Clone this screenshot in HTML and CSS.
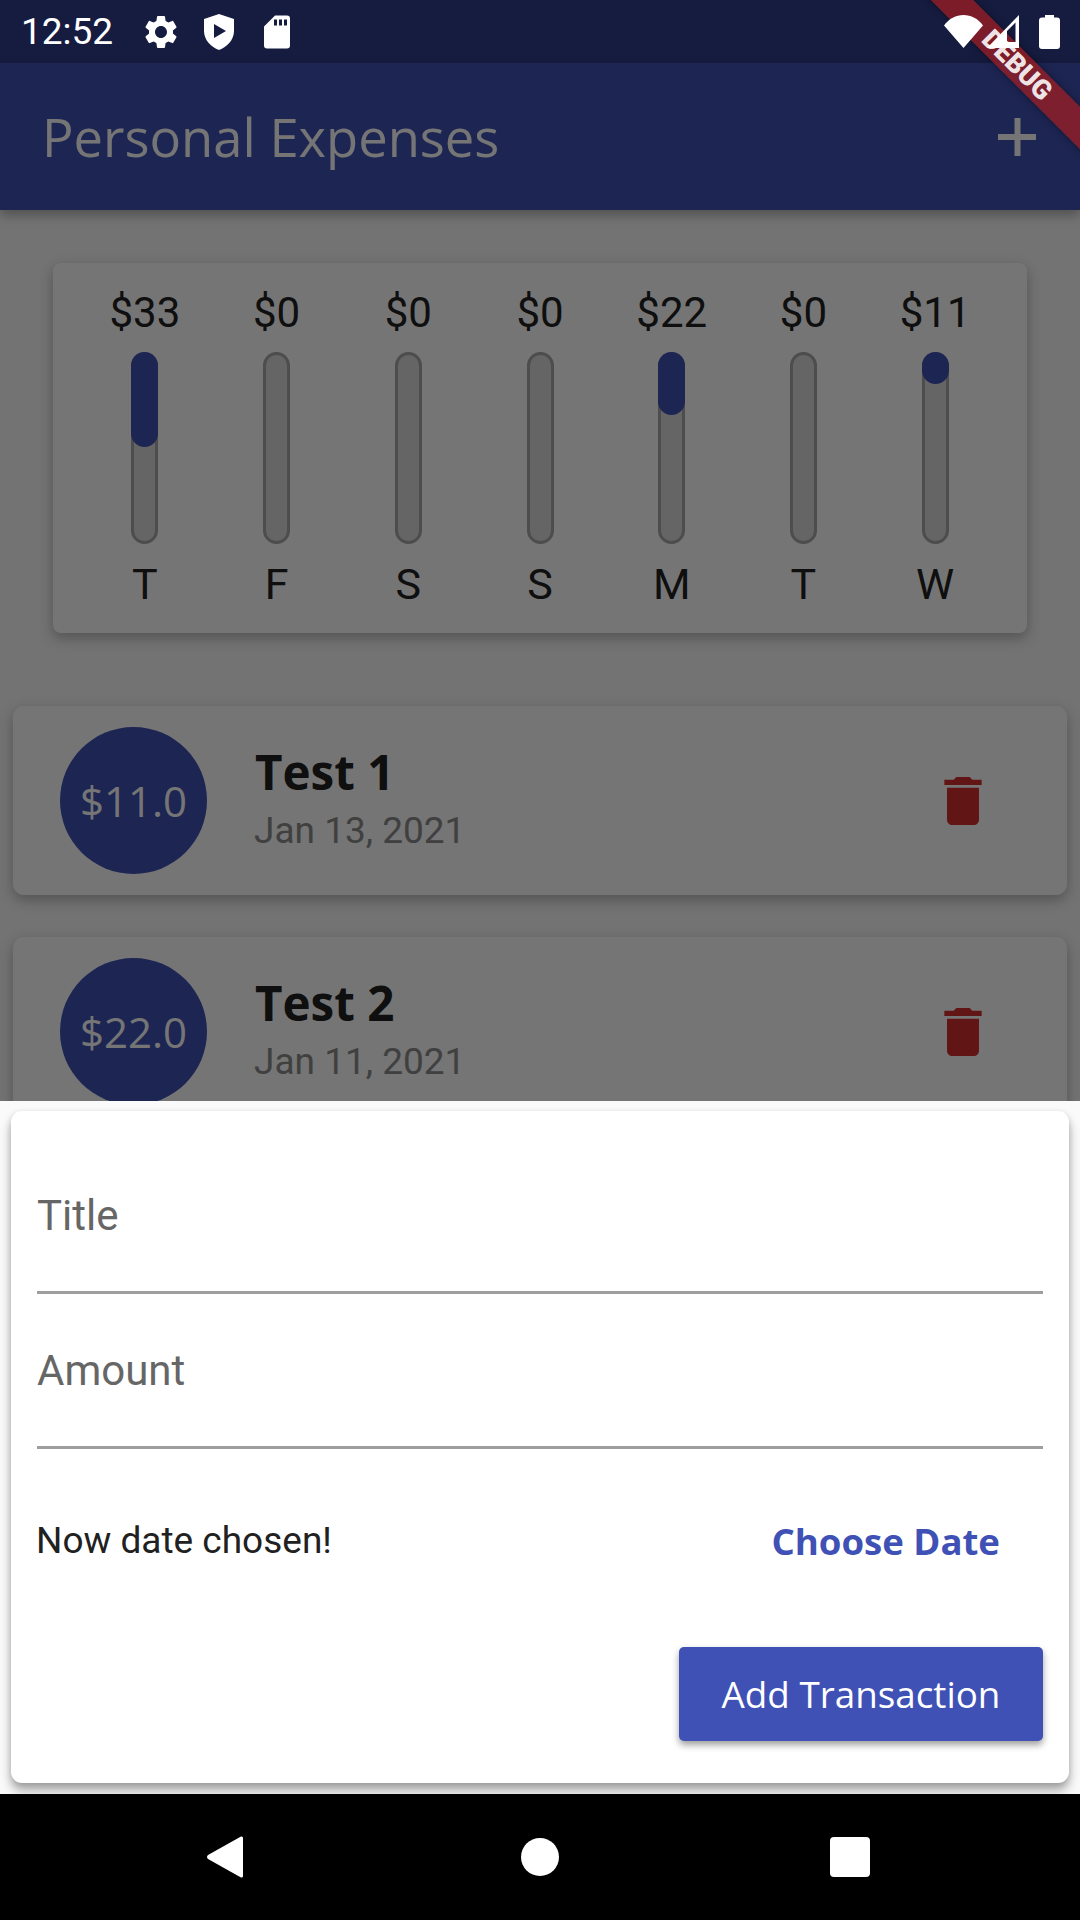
FILE: index.html
```html
<!DOCTYPE html>
<html>
<head>
<meta charset="utf-8">
<title>Personal Expenses</title>
<link rel="stylesheet" href="styles.css">
</head>
<body>
<div class="phone">
  <div class="status">
    <div class="status-left">
      <span class="clock">12:52</span>
      <svg class="ic-gear" viewBox="0 0 24 24"><path d="M19.14 12.94c.04-.3.06-.61.06-.94s-.02-.64-.07-.94l2.03-1.58c.18-.14.23-.41.12-.61l-1.92-3.32c-.12-.22-.37-.29-.59-.22l-2.39.96c-.5-.38-1.03-.7-1.62-.94l-.36-2.54c-.04-.24-.24-.41-.48-.41h-3.84c-.24 0-.43.17-.47.41l-.36 2.54c-.59.24-1.13.57-1.62.94l-2.39-.96c-.22-.08-.47 0-.59.22L2.74 8.87c-.12.21-.08.47.12.61l2.03 1.58c-.05.3-.09.63-.09.94s.02.64.07.94l-2.03 1.58c-.18.14-.23.41-.12.61l1.92 3.32c.12.22.37.29.59.22l2.39-.96c.5.38 1.03.7 1.62.94l.36 2.54c.05.24.24.41.48.41h3.84c.24 0 .44-.17.47-.41l.36-2.54c.59-.24 1.13-.56 1.62-.94l2.39.96c.22.08.47 0 .59-.22l1.92-3.32c.12-.22.07-.47-.12-.61l-2.01-1.58zM12 15.6c-1.98 0-3.6-1.62-3.6-3.6s1.62-3.6 3.6-3.6 3.6 1.62 3.6 3.6-1.62 3.6-3.6 3.6z"/></svg>
      <svg class="ic-shield" viewBox="0 0 30 36"><path fill-rule="evenodd" d="M15 0 L30 5 V17 C30 26 23 33 15 36 C7 33 0 26 0 17 V5 Z M10 10 V24 L22 17 Z"/></svg>
      <svg class="ic-sd" viewBox="0 0 26 33"><path fill-rule="evenodd" d="M11 0 H23 A3 3 0 0 1 26 3 V30 A3 3 0 0 1 23 33 H3 A3 3 0 0 1 0 30 V11 Z M10 4 V10 H13 V4 Z M15 4 V10 H18 V4 Z M20 4 V10 H23 V4 Z"/></svg>
    </div>
    <div class="status-right">
      <svg class="ic-wifi" viewBox="0 0 39 33"><path d="M0 10.5 C5 3.5 12 0 19.5 0 C27 0 34 3.5 39 10.5 L19.5 33 Z"/></svg>
      <svg class="ic-signal" viewBox="0 0 33 33"><path fill-rule="evenodd" d="M32 0 V33 H0 Z M28.500 7.500 L20 16 V27 H28.500 Z"/></svg>
      <svg class="ic-battery" viewBox="0 0 21 34"><path d="M6 0 H15 V2.500 H18 A3 3 0 0 1 21 5.500 V31 A3 3 0 0 1 18 34 H3 A3 3 0 0 1 0 31 V5.500 A3 3 0 0 1 3 2.500 H6 Z"/></svg>
    </div>
  </div>

  <header class="appbar">
    <h1 class="appbar-title">Personal Expenses</h1>
    <svg class="ic-plus" viewBox="0 0 38 38"><path d="M16.500 0 H22.500 V16 H38 V22 H22.500 V38 H16.500 V22 H0 V16 H16.500 Z"/></svg>
  </header>

  <main class="content">
    <section class="chart">
      <div class="day"><span class="amt">$33</span><div class="track"><div class="fill" style="height:51%"></div></div><span class="letter">T</span></div>
      <div class="day"><span class="amt">$0</span><div class="track"></div><span class="letter">F</span></div>
      <div class="day"><span class="amt">$0</span><div class="track"></div><span class="letter">S</span></div>
      <div class="day"><span class="amt">$0</span><div class="track"></div><span class="letter">S</span></div>
      <div class="day"><span class="amt">$22</span><div class="track"><div class="fill" style="height:34%"></div></div><span class="letter">M</span></div>
      <div class="day"><span class="amt">$0</span><div class="track"></div><span class="letter">T</span></div>
      <div class="day"><span class="amt">$11</span><div class="track"><div class="fill" style="height:17%"></div></div><span class="letter">W</span></div>
    </section>

    <div class="tx-list">
      <article class="tx">
        <div class="tx-amt">$11.0</div>
        <div class="tx-info">
          <div class="tx-title">Test 1</div>
          <div class="tx-date">Jan 13, 2021</div>
        </div>
        <svg class="ic-trash" viewBox="0 0 24 24"><path d="M6 19c0 1.100.9 2 2 2h8c1.100 0 2-.9 2-2V7H6v12zM19 4h-3.500l-1-1h-5l-1 1H5v2h14V4z"/></svg>
      </article>
      <article class="tx">
        <div class="tx-amt">$22.0</div>
        <div class="tx-info">
          <div class="tx-title">Test 2</div>
          <div class="tx-date">Jan 11, 2021</div>
        </div>
        <svg class="ic-trash" viewBox="0 0 24 24"><path d="M6 19c0 1.100.9 2 2 2h8c1.100 0 2-.9 2-2V7H6v12zM19 4h-3.500l-1-1h-5l-1 1H5v2h14V4z"/></svg>
      </article>
    </div>
  </main>

  <div class="scrim"></div>

  <div class="sheet">
    <form class="sheet-card">
      <div class="field field-title">Title</div>
      <div class="field">Amount</div>
      <div class="date-row">
        <span class="date-text">Now date chosen!</span>
        <span class="date-btn">Choose Date</span>
      </div>
      <div class="submit-row">
        <span class="submit">Add Transaction</span>
      </div>
    </form>
  </div>

  <div class="banner"><span>DEBUG</span></div>

  <nav class="navbar">
    <svg class="nav-back" viewBox="0 0 36 42"><path d="M34 0.500 Q36 0 36 2 V40 Q36 42 34 41.500 L1 23 Q-1 21 1 19 Z"/></svg>
    <div class="nav-home"></div>
    <div class="nav-recent"></div>
  </nav>
</div>
</body>
</html>
```

FILE: styles.css
```css
* { box-sizing: border-box; }
html, body { margin: 0; padding: 0; }
body { font-family: "Roboto", sans-serif; background: #000; }
svg { display: block; fill: currentColor; flex: none; }

.phone {
  position: relative;
  width: 1080px; height: 1920px;
  overflow: hidden;
  display: flex; flex-direction: column;
  background: #fafafa;
}

/* status bar stays bright above the scrim */
.status {
  height: 63px; flex: none;
  background: #161c40;
  color: #fff;
  display: flex; justify-content: space-between; align-items: center;
  padding: 0 20px 0 21px;
}
.status-left, .status-right { position: relative; z-index: 5; display: flex; align-items: center; }
.clock { font-size: 37px; line-height: 63px; width: 120px; }
.ic-gear { width: 40px; height: 40px; }
.ic-shield { width: 30px; height: 36px; margin-left: 23px; }
.ic-sd { width: 26px; height: 34px; margin-left: 30px; }
.ic-wifi { width: 39px; height: 33px; }
.ic-signal { width: 33px; height: 33px; margin-left: 4px; }
.ic-battery { width: 21px; height: 34px; margin-left: 19px; }

.appbar {
  height: 147px; flex: none;
  background: #3f51b5;
  color: #fff;
  display: flex; justify-content: space-between; align-items: center;
  padding: 0 44px 0 42px;
  box-shadow: 0 5px 11px rgba(0, 0, 0, 0.3);
  position: relative;
}
.appbar-title { margin: 0; font: 400 52.500px "Open Sans", sans-serif; }
.ic-plus { width: 38px; height: 38px; }

.content { flex: 1; min-height: 0; }

.chart {
  margin: 53px 53px 0;
  height: 370px;
  padding: 22px 26px 0;
  background: #fff;
  border-radius: 8px;
  box-shadow: 0 5px 14px rgba(0, 0, 0, 0.28);
  display: flex;
}
.day { flex: 1; display: flex; flex-direction: column; align-items: center; }
.amt { font-size: 42px; line-height: 56px; color: #212121; }
.track {
  width: 27px; height: 192px;
  margin-top: 11px;
  border: 3px solid #a8a8a8;
  border-radius: 14px;
  background: #dcdcdc;
  position: relative;
}
.fill {
  position: absolute; top: -3px; left: -3px; right: -3px;
  background: #3f51b5;
  border-radius: 14px;
}
.letter { font-size: 43px; line-height: 56px; margin-top: 12px; color: #212121; }

.tx-list { margin: 73px 13px 0; display: flex; flex-direction: column; gap: 42px; }
.tx {
  height: 189px;
  background: #fff;
  border-radius: 11px;
  box-shadow: 0 5px 14px rgba(0, 0, 0, 0.28);
  display: flex; align-items: center;
  padding: 0 72px 0 47px;
}
.tx-amt {
  width: 147px; height: 147px; flex: none;
  border-radius: 50%;
  background: #3f51b5;
  color: #fff;
  font: 400 42px "Open Sans", sans-serif;
  display: flex; align-items: center; justify-content: center;
}
.tx-info { flex: 1; margin-left: 48px; padding-bottom: 6px; }
.tx-title { font: 700 47.500px/58px "Open Sans", sans-serif; color: #212121; }
.tx-date { font-size: 37px; line-height: 44px; margin: 8px 0 0 -1px; color: #8c8c8c; }
.ic-trash { width: 64px; height: 64px; color: #d32f2f; }

.scrim {
  position: absolute; top: 63px; left: 0; right: 0; bottom: 126px;
  background: rgba(0, 0, 0, 0.54);
}

.sheet {
  position: absolute; left: 0; right: 0; top: 1101px; bottom: 126px;
  background: #fafafa;
  overflow: hidden;
}
.sheet-card {
  position: absolute; left: 11px; right: 11px; top: 10px; bottom: 11px;
  background: #fff;
  border-radius: 11px;
  box-shadow: 0 8px 11px rgba(0, 0, 0, 0.3), 0 2px 6px rgba(0, 0, 0, 0.14);
  padding: 0 26px;
  display: flex; flex-direction: column;
}
.field {
  height: 155px;
  padding-top: 51px;
  font-size: 42px; line-height: 52px;
  color: #666;
  border-bottom: 3px solid #9e9e9e;
}
.field-title { height: 183px; padding-top: 79px; }
.date-row {
  height: 183px;
  display: flex; justify-content: space-between; align-items: center;
  padding-right: 43px;
}
.date-text { font-size: 37px; margin-left: -1px; color: #212121; }
.date-btn { font: 700 36.600px "Open Sans", sans-serif; color: #3f51b5; }
.submit-row { display: flex; justify-content: flex-end; margin-top: 15px; }
.submit {
  width: 364px; height: 94px;
  background: #3f51b5;
  color: #fff;
  border-radius: 5px;
  font: 400 36.800px "Open Sans", sans-serif;
  display: flex; align-items: center; justify-content: center;
  box-shadow: 0 4px 7px rgba(0, 0, 0, 0.38);
}

/* flutter debug banner */
.banner {
  position: absolute; top: 49px; right: -86px;
  z-index: 4;
  width: 300px; height: 30px;
  transform: rotate(45deg);
  background: rgba(183, 28, 28, 0.63);
  box-shadow: 0 0 8px rgba(0, 0, 0, 0.4);
  color: rgba(255, 255, 255, 0.9);
  font: 900 27px/30px "Roboto", sans-serif;
  text-align: center;
  padding-left: 3px;
}

.navbar {
  height: 126px; flex: none;
  background: #000;
  position: relative;
  display: flex; align-items: center;
  padding: 0 210px 0 207px;
  justify-content: space-between;
  color: #fff;
}
.nav-back { width: 36px; height: 42px; }
.nav-home { width: 38px; height: 38px; margin-left: 7px; border-radius: 50%; background: #fff; }
.nav-recent { width: 40px; height: 40px; border-radius: 4px; background: #fff; }
```
